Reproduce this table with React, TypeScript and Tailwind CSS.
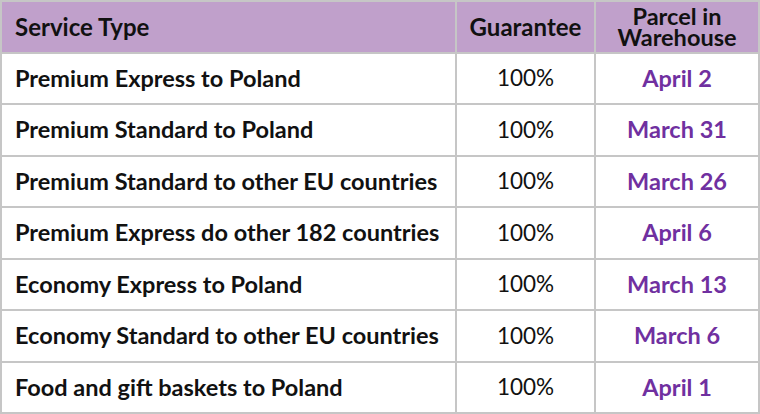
const rows = [
  ["Premium Express to Poland", "April 2"],
  ["Premium Standard to Poland", "March 31"],
  ["Premium Standard to other EU countries", "March 26"],
  ["Premium Express do other 182 countries", "April 6"],
  ["Economy Express to Poland", "March 13"],
  ["Economy Standard to other EU countries", "March 6"],
  ["Food and gift baskets to Poland", "April 1"],
];

const cell = "bg-white flex items-center whitespace-nowrap";

export default function App() {
  return (
    <div
      className="w-[760px] h-[414px] bg-[#c6c6c6] p-[2px] grid grid-cols-[453px_137px_162px] grid-rows-8 gap-[2px] text-[22.5px] text-[#111111]"
      style={{ fontFamily: "Lato, 'Open Sans', sans-serif" }}
    >
      <div className="bg-[#c0a0cb] flex items-center pl-[13px] font-bold text-[24px]">Service Type</div>
      <div className="bg-[#c0a0cb] flex items-center justify-center font-bold text-[24px]">Guarantee</div>
      <div className="bg-[#c0a0cb] flex flex-col items-center justify-center font-bold text-center text-[23.5px] leading-[21px] pt-[1px]">
        <span>Parcel in</span>
        <span>Warehouse</span>
      </div>
      {rows.map(([service, date]) => (
        <>
          <div key={service} className={`${cell} pl-[13px] font-bold text-[23.5px]`}>{service}</div>
          <div className={`${cell} justify-center`}>100%</div>
          <div className={`${cell} justify-center font-bold text-[23.5px] text-[#7030a0]`}>{date}</div>
        </>
      ))}
    </div>
  );
}
